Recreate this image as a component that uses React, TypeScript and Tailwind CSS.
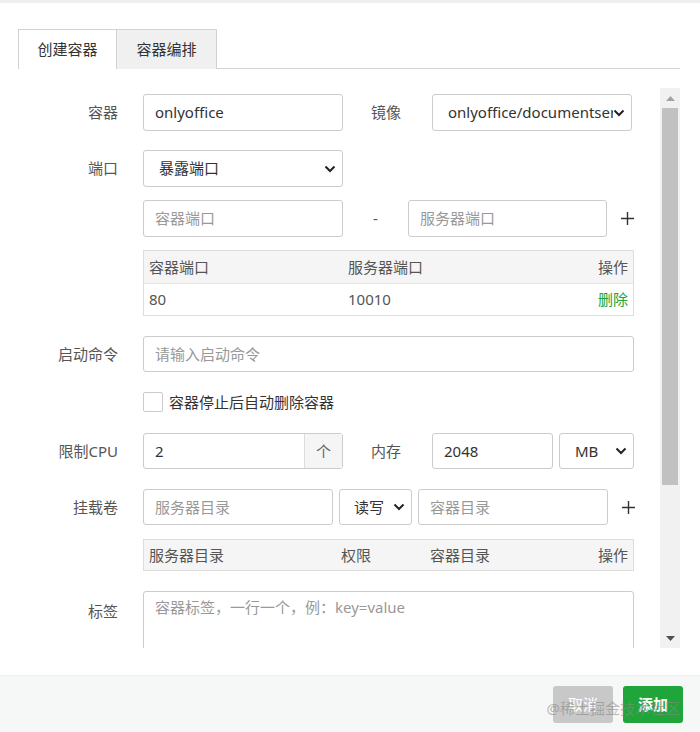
import React from "react";

const FONT = { fontFamily: '"Noto Sans", "Noto Sans CJK SC", sans-serif' };

function Chevron() {
  return (
    <svg width="12" height="8" viewBox="0 0 12 8" className="shrink-0">
      <path d="M1.5 1.5 L6 6 L10.5 1.5" fill="none" stroke="#222" strokeWidth="2" />
    </svg>
  );
}

function Plus() {
  return (
    <svg width="13" height="13" viewBox="0 0 13 13">
      <path d="M6.5 0 V13 M0 6.5 H13" stroke="#333" strokeWidth="1.4" />
    </svg>
  );
}

function Label({ children, w = "w-[100px]" }: { children: React.ReactNode; w?: string }) {
  return <div className={`${w} shrink-0 text-right text-[15px] text-[#555]`}>{children}</div>;
}

function Input({ value, placeholder, className }: { value?: string; placeholder?: string; className: string }) {
  return (
    <div
      className={`flex items-center border border-[#ccc] rounded-[3px] bg-white px-[11px] text-[15px] ${className} ${
        value ? "text-[#333]" : "text-[#999]"
      }`}
    >
      <span className="truncate whitespace-nowrap">{value ?? placeholder}</span>
    </div>
  );
}

function Select({ value, className, pl = "pl-[15px]" }: { value: string; className: string; pl?: string }) {
  return (
    <div
      className={`flex items-center justify-between border border-[#ccc] rounded-[3px] bg-white ${pl} pr-[6px] text-[15px] text-[#333] ${className}`}
    >
      <span className="overflow-hidden whitespace-nowrap">{value}</span>
      <Chevron />
    </div>
  );
}

export default function App() {
  const tabs = ["创建容器", "容器编排"];

  return (
    <div className="w-[700px] h-[732px] bg-white flex flex-col overflow-hidden relative" style={FONT}>
      <div className="h-[3px] bg-[#eeeeee]" />

      {/* tabs */}
      <div className="mt-[26px] ml-[18px] mr-[20px] flex border-b border-[#d2d2d2] h-[40px]">
        {tabs.map((t, i) => (
          <div
            key={t}
            className={`h-[40px] flex items-center justify-center text-[15px] text-[#333] border-t border-l border-r border-[#d2d2d2] ${
              i === 0 ? "w-[99px] bg-white -mb-px h-[40px]" : "w-[100px] bg-[#f0f0f0] border-l-0"
            }`}
          >
            {t}
          </div>
        ))}
      </div>

      {/* scroll area */}
      <div className="mt-[19px] ml-[18px] flex h-[560px]">
        <div className="flex-1 overflow-hidden pt-[6px]">
          {/* 容器 / 镜像 */}
          <div className="flex items-center h-[37px]">
            <Label>容器</Label>
            <Input value="onlyoffice" className="ml-[25px] w-[200px] h-[37px]" />
            <Label w="w-[58px]">镜像</Label>
            <Select value="onlyoffice/documentserver" className="ml-[31px] w-[200px] h-[37px]" />
          </div>

          {/* 端口 */}
          <div className="flex items-center h-[37px] mt-[19px]">
            <Label>端口</Label>
            <Select value="暴露端口" className="ml-[25px] w-[200px] h-[37px]" />
          </div>

          <div className="flex items-center h-[37px] mt-[13px] pl-[125px]">
            <Input placeholder="容器端口" className="w-[200px] h-[37px]" />
            <div className="w-[65px] text-center text-[15px] text-[#555]">-</div>
            <Input placeholder="服务器端口" className="w-[199px] h-[37px]" />
            <div className="ml-[14px]">
              <Plus />
            </div>
          </div>

          {/* port table */}
          <div className="ml-[125px] mt-[13px] w-[491px] border border-[#ddd] text-[15px] text-[#555]">
            <div className="flex items-center h-[33px] bg-[#f5f5f5] px-[5px] border-b border-[#e4e4e4]">
              <div className="w-[199px]">容器端口</div>
              <div className="flex-1">服务器端口</div>
              <div>操作</div>
            </div>
            <div className="flex items-center h-[31px] px-[5px]">
              <div className="w-[199px]">80</div>
              <div className="flex-1">10010</div>
              <div className="text-[#20a53a]">删除</div>
            </div>
          </div>

          {/* 启动命令 */}
          <div className="flex items-center h-[36px] mt-[20px]">
            <Label>启动命令</Label>
            <Input placeholder="请输入启动命令" className="ml-[25px] w-[491px] h-[36px]" />
          </div>

          {/* checkbox */}
          <div className="flex items-center h-[20px] mt-[20px] pl-[125px]">
            <div className="w-[20px] h-[20px] border border-[#ccc] rounded-[2px] bg-white" />
            <div className="ml-[6px] text-[15px] text-[#333]">容器停止后自动删除容器</div>
          </div>

          {/* CPU / 内存 */}
          <div className="flex items-center h-[36px] mt-[21px]">
            <Label>限制CPU</Label>
            <div className="ml-[25px] w-[200px] h-[36px] flex border border-[#ccc] rounded-[3px] text-[15px]">
              <div className="flex-1 flex items-center px-[11px] text-[#333]">2</div>
              <div className="w-[38px] flex items-center justify-center bg-[#f5f5f5] border-l border-[#ddd] text-[#666]">
                个
              </div>
            </div>
            <Label w="w-[58px]">内存</Label>
            <Input value="2048" className="ml-[31px] w-[121px] h-[36px]" />
            <Select value="MB" className="ml-[6px] w-[75px] h-[36px]" />
          </div>

          {/* 挂载卷 */}
          <div className="flex items-center h-[36px] mt-[20px]">
            <Label>挂载卷</Label>
            <Input placeholder="服务器目录" className="ml-[25px] w-[190px] h-[36px]" />
            <Select value="读写" className="ml-[6px] w-[73px] h-[36px]" pl="pl-[14px]" />
            <Input placeholder="容器目录" className="ml-[6px] w-[190px] h-[36px]" />
            <div className="ml-[14px]">
              <Plus />
            </div>
          </div>

          {/* volume table */}
          <div className="ml-[125px] mt-[14px] w-[491px] border border-[#ddd] text-[15px] text-[#555]">
            <div className="flex items-center h-[30px] bg-[#f5f5f5] px-[5px]">
              <div className="w-[192px]">服务器目录</div>
              <div className="w-[89px]">权限</div>
              <div className="flex-1">容器目录</div>
              <div>操作</div>
            </div>
          </div>

          {/* 标签 */}
          <div className="flex mt-[20px]">
            <Label>
              <div className="pt-[9px]">标签</div>
            </Label>
            <div className="ml-[25px] w-[491px] h-[80px] border border-[#ccc] rounded-[3px] px-[11px] pt-[4px] text-[15px] text-[#999]">
              容器标签，一行一个，例：key=value
            </div>
          </div>
        </div>

        {/* scrollbar */}
        <div className="w-[20px] mr-[20px] bg-[#f1f1f1] flex flex-col items-center">
          <div className="h-[20px] flex items-center justify-center">
            <svg width="9" height="5" viewBox="0 0 9 5">
              <path d="M4.5 0 L9 5 L0 5 Z" fill="#a3a3a3" />
            </svg>
          </div>
          <div className="w-[16px] h-[377px] bg-[#c1c1c1]" />
          <div className="flex-1" />
          <div className="h-[20px] flex items-center justify-center">
            <svg width="9" height="5" viewBox="0 0 9 5">
              <path d="M0 0 L9 0 L4.5 5 Z" fill="#505050" />
            </svg>
          </div>
        </div>
      </div>

      {/* footer */}
      <div className="mt-auto h-[57px] bg-[#f6f7f7] border-t border-[#f0f0f0] flex items-center justify-end pr-[17px] gap-[10px] relative">
        <div className="w-[60px] h-[37px] rounded-[3px] bg-[#c8c8c8] text-white text-[15px] flex items-center justify-center">
          取消
        </div>
        <div className="w-[60px] h-[37px] rounded-[3px] bg-[#20a53a] text-white text-[15px] font-bold flex items-center justify-center">
          添加
        </div>
        <div className="absolute right-[20px] top-[21px] text-[15px] text-[#888]/60 whitespace-nowrap pointer-events-none">
          @稀土掘金技术社区
        </div>
      </div>
    </div>
  );
}
